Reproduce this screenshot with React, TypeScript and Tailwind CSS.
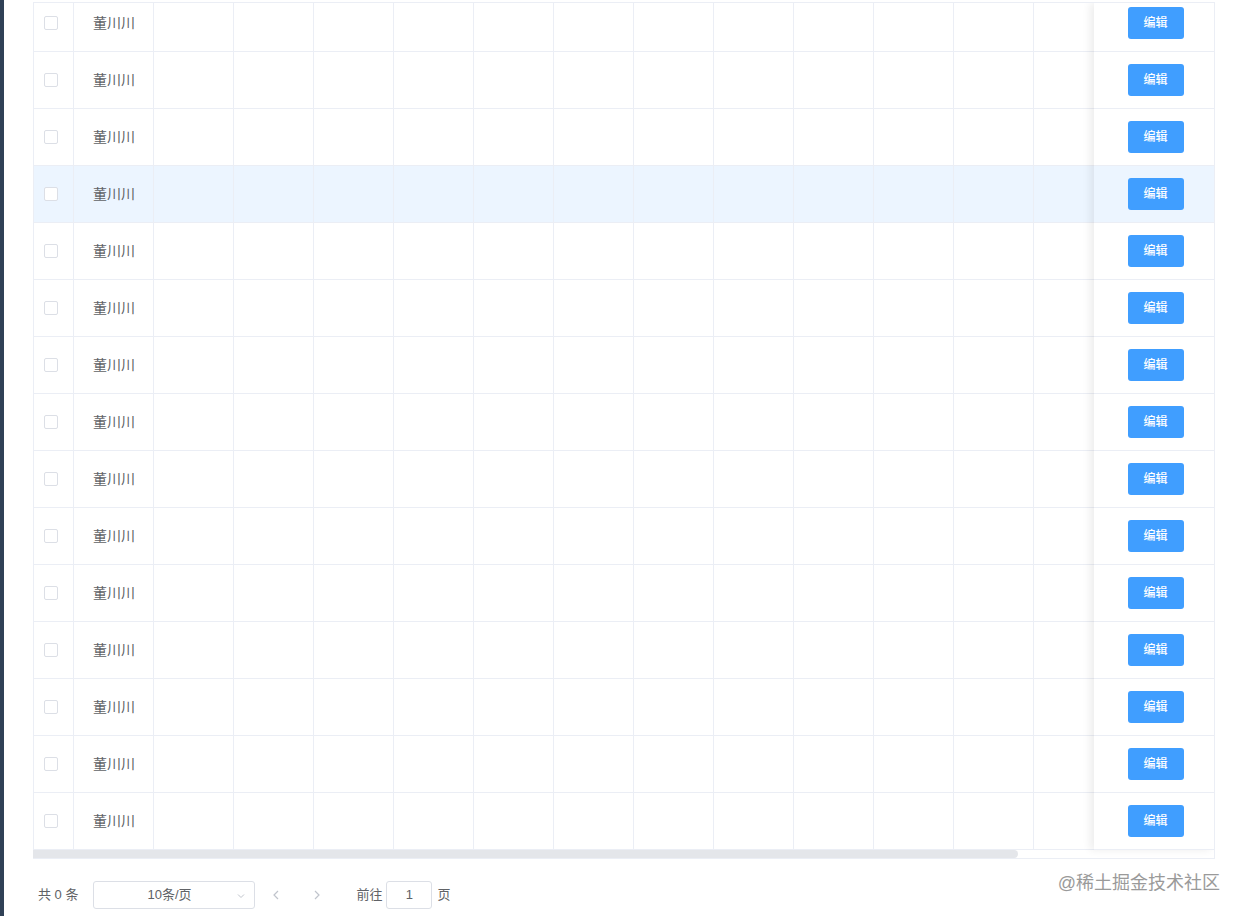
const ROWS = Array.from({ length: 15 }, (_, i) => i)
const EMPTY_COLS = Array.from({ length: 12 }, (_, i) => i)
const ACTIVE_ROW = 3

function Checkbox() {
  return <span className="block h-[14px] w-[14px] rounded-[2px] border border-[#dcdfe6] bg-white" />
}

export default function App() {
  return (
    <div
      className="flex h-[916px] w-[1244px] overflow-hidden bg-white text-[#606266]"
      style={{ fontFamily: '"Liberation Sans", "Noto Sans CJK SC", sans-serif' }}
    >
      <div className="h-full w-[4px] shrink-0 bg-[#304156]" />
      <div className="w-[1182px] min-w-0 shrink-0 ml-[29px]">
        {/* table */}
        <div className="mt-[2px] border-t border-r border-b border-[#ebeef5]">
          <div className="flex overflow-hidden">
            <div className="min-w-0 flex-1 overflow-hidden">
              <div className="-mt-[8px] w-max border-l border-[#ebeef5]">
                {ROWS.map((r) => (
                  <div
                    key={r}
                    className={`flex h-[57px] border-b border-[#ebeef5] ${r === ACTIVE_ROW ? "bg-[#ecf5ff]" : "bg-white"}`}
                  >
                    <div className="flex w-[40px] items-center border-r border-[#ebeef5] pl-[10px]">
                      <Checkbox />
                    </div>
                    <div className="flex w-[80px] items-center border-r border-[#ebeef5] pl-[19px] text-[14px]">
                      董川川
                    </div>
                    {EMPTY_COLS.map((c) => (
                      <div key={c} className="w-[80px] border-r border-[#ebeef5]" />
                    ))}
                  </div>
                ))}
              </div>
              {/* horizontal scrollbar */}
              <div className="h-[8px] bg-white">
                <div className="h-full w-[985px] rounded-r-[4px] bg-[#e4e6ea]" />
              </div>
            </div>
            <div className="relative z-10 w-[120px] shrink-0 self-start bg-white shadow-[-4px_0_8px_rgba(0,0,0,0.07)]">
              <div className="-mt-[8px]">
                {ROWS.map((r) => (
                  <div
                    key={r}
                    className={`flex h-[57px] items-center justify-center border-b border-[#ebeef5] ${r === ACTIVE_ROW ? "bg-[#ecf5ff]" : "bg-white"}`}
                  >
                    <button className="ml-[3px] flex h-[32px] w-[56px] items-center justify-center rounded-[3px] bg-[#409eff] text-[12px] font-medium text-white">
                      编辑
                    </button>
                  </div>
                ))}
              </div>
            </div>
          </div>
        </div>

        {/* pagination */}
        <div className="mt-[22px] flex items-center justify-between">
          <div className="flex items-center text-[13px] text-[#606266]">
            <span className="ml-[5px] mr-[15px]">共 0 条</span>
            <div className="relative flex h-[28px] w-[162px] items-center justify-center rounded-[3px] border border-[#dcdfe6] text-[13px]">
              <span className="-ml-[10px]">10条/页</span>
              <svg className="absolute right-[8px] top-[9px]" width="10" height="10" viewBox="0 0 10 10">
                <path d="M2 3.5 L5 6.5 L8 3.5" fill="none" stroke="#c0c4cc" strokeWidth="1" />
              </svg>
            </div>
            <div className="ml-[8px] flex h-[28px] w-[26px] items-center justify-center">
              <svg width="10" height="12" viewBox="0 0 10 12">
                <path d="M7 2 L3 6 L7 10" fill="none" stroke="#c0c4cc" strokeWidth="1.2" />
              </svg>
            </div>
            <div className="ml-[15px] flex h-[28px] w-[26px] items-center justify-center">
              <svg width="10" height="12" viewBox="0 0 10 12">
                <path d="M3 2 L7 6 L3 10" fill="none" stroke="#c0c4cc" strokeWidth="1.2" />
              </svg>
            </div>
            <span className="ml-[26px]">前往</span>
            <div className="ml-[4px] flex h-[28px] w-[46px] items-center justify-center rounded-[3px] border border-[#dcdfe6]">
              1
            </div>
            <span className="ml-[5px]">页</span>
          </div>
          <span className="-mt-[24px] mr-[-5px] text-[18px] text-[#9a9a9a]">@稀土掘金技术社区</span>
        </div>
      </div>
    </div>
  )
}
